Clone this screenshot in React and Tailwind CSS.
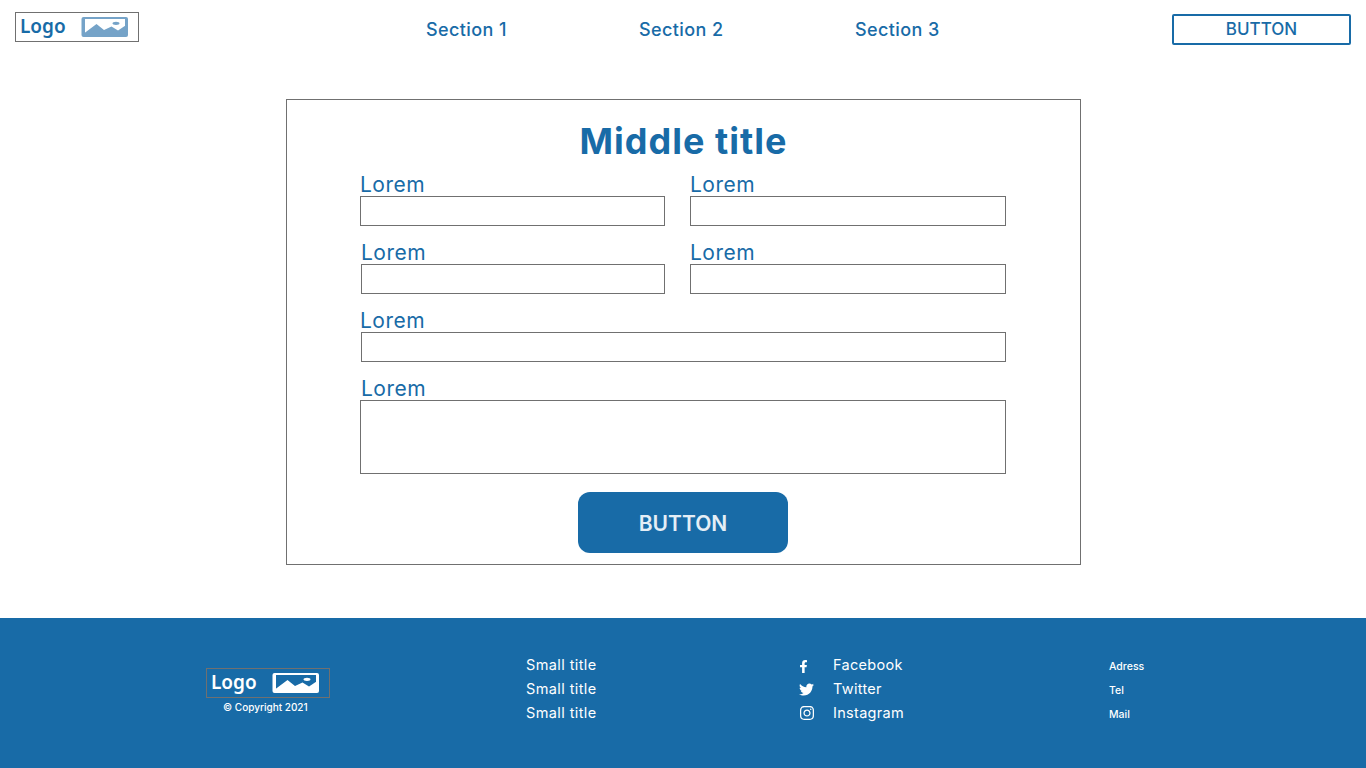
import React from "react";
import { FaFacebookF, FaTwitter, FaInstagram } from "react-icons/fa";

function LogoImage({ color, inner }) {
  return (
    <svg width="47" height="20" viewBox="0 0 47 20" className="block">
      <rect x="0.5" y="0" width="46.5" height="20" rx="2" fill={color} />
      <rect x="4" y="2" width="40" height="14" fill={inner} />
      <path d="M3.5 17 L3.5 16 L15.5 7 L23 13 L30.5 9.5 L37 13.5 L44.5 8.5 L44.5 17 Z" fill={color} />
      <ellipse cx="35" cy="6.3" rx="3.5" ry="1.6" fill={color} />
    </svg>
  );
}

function Logo({ className, color, inner }) {
  return (
    <div className={`flex h-[30px] w-[124px] items-center border border-[#707070] pl-1 font-['Noto_Sans',sans-serif] text-[19px] font-semibold ${className}`}>
      <span className="-mt-[1px] w-[61px]">Logo</span>
      <LogoImage color={color} inner={inner} />
    </div>
  );
}

function Field({ label, className = "", boxClass = "h-[30px]" }) {
  return (
    <div className={className}>
      <div className="h-[28px] pt-[3px] text-[21px] leading-[28px] tracking-[0.5px] text-[#186ba7]">{label}</div>
      <div className={`border border-[#707070] bg-white ${boxClass}`} />
    </div>
  );
}

function FooterRow({ icon, label, iconClass = "" }) {
  return (
    <div className="flex h-[24px] items-center text-[14.5px] tracking-[0.3px]">
      <span className={`flex w-[34px] items-center ${iconClass}`}>{icon}</span>
      {label}
    </div>
  );
}

export default function App() {
  return (
    <div className="flex min-h-[768px] flex-col bg-white font-['Inter',sans-serif] text-[#186ba7]">
      <header className="flex h-[60px] items-start">
        <Logo className="ml-[15px] mt-[12px] text-[#186ba7]" color="#75a3c8" inner="#ffffff" />
        <nav className="ml-[287px] mt-[18px] flex text-[18px] font-medium leading-[24px] tracking-[0.4px]">
          <a className="w-[213px]">Section 1</a>
          <a className="w-[216px]">Section 2</a>
          <a>Section 3</a>
        </nav>
        <button className="ml-auto mr-[15px] mt-[14px] h-[31px] w-[179px] rounded-[2px] border-2 border-[#186ba7] text-center text-[17px] font-medium leading-none">
          BUTTON
        </button>
      </header>

      <main className="flex h-[558px] justify-center pt-[39px]">
        <section className="ml-[1px] h-[466px] w-[795px] border border-[#707070] px-[73px]">
          <h1 className="mt-[18px] h-[46px] text-center text-[36px] font-bold leading-[46px] tracking-[1px]">Middle title</h1>
          <div className="mt-[4px] grid grid-cols-[305px_316px] gap-x-[25px] gap-y-[10px]">
            <Field label="Lorem" />
            <Field label="Lorem" />
            <Field label="Lorem" className="ml-[1px]" />
            <Field label="Lorem" />
            <Field label="Lorem" className="col-span-2 [&>div:last-child]:ml-[1px]" />
            <Field label="Lorem" className="col-span-2 [&>div:first-child]:ml-[1px]" boxClass="h-[74px]" />
          </div>
          <div className="mt-[18px] flex justify-center">
            <button className="-ml-[1px] h-[61px] w-[210px] rounded-[12px] bg-[#186ba7] pt-[2px] text-[21px] font-semibold text-[#e4eef6]">
              BUTTON
            </button>
          </div>
        </section>
      </main>

      <footer className="flex h-[150px] bg-[#186ba7] pl-[206px] pt-[35px] text-white">
        <div className="w-[320px] pt-[15px]">
          <Logo className="text-white" color="#ffffff" inner="#186ba7" />
          <div className="ml-[17px] mt-[2px] text-[10px] font-medium leading-[14px]">© Copyright 2021</div>
        </div>
        <div className="w-[273px] text-[14.5px] leading-[24px] tracking-[0.4px]">
          <div>Small title</div>
          <div>Small title</div>
          <div>Small title</div>
        </div>
        <div className="w-[310px]">
          <FooterRow label="Facebook" icon={<FaFacebookF size={13} />} iconClass="-ml-[2px] !w-[36px] pt-[2px]" />
          <FooterRow label="Twitter" icon={<FaTwitter size={15} />} />
          <FooterRow label="Instagram" icon={<FaInstagram size={16} />} />
        </div>
        <div className="pt-[2px] text-[10.5px] font-medium leading-[24px]">
          <div>Adress</div>
          <div>Tel</div>
          <div>Mail</div>
        </div>
      </footer>
    </div>
  );
}
